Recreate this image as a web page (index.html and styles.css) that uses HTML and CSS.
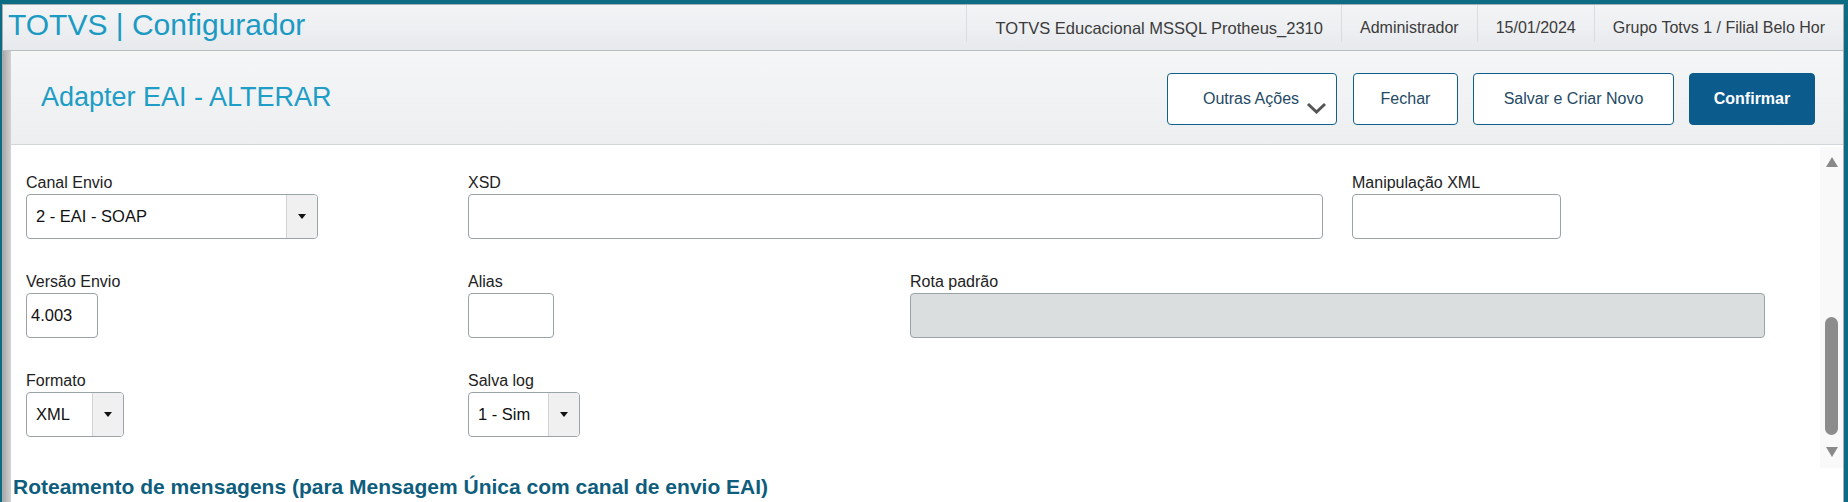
FILE: index.html
```html
<!DOCTYPE html>
<html lang="pt-BR">
<head>
<meta charset="utf-8">
<title>TOTVS | Configurador</title>
<link rel="stylesheet" href="styles.css">
</head>
<body>
<div class="app">
  <header class="topbar">
    <div class="brand">TOTVS | Configurador</div>
    <ul class="info">
      <li class="info-item first">TOTVS Educacional MSSQL Protheus_2310</li>
      <li class="info-item">Administrador</li>
      <li class="info-item">15/01/2024</li>
      <li class="info-item">Grupo Totvs 1 / Filial Belo Hor</li>
    </ul>
  </header>
  <div class="main">
    <div class="strip"></div>
    <div class="work">
      <div class="pagehead">
        <h1 class="page-title">Adapter EAI - ALTERAR</h1>
        <div class="actions">
          <button class="btn btn-more"><span class="more-label">Outras Ações</span><svg class="chev" width="21" height="12" viewBox="0 0 21 12"><polyline points="2,2 10.5,10 19,2" fill="none" stroke="#555" stroke-width="3"/></svg></button>
          <button class="btn btn-close">Fechar</button>
          <button class="btn btn-save">Salvar e Criar Novo</button>
          <button class="btn btn-primary">Confirmar</button>
        </div>
      </div>
      <div class="body">
        <div class="form">
          <div class="grid">
            <div class="field">
              <label>Canal Envio</label>
              <div class="box select w-canal"><span class="value">2 - EAI - SOAP</span><span class="caret"></span></div>
            </div>
            <div class="field span2">
              <label>XSD</label>
              <div class="box w-wide"></div>
            </div>
            <div class="field">
              <label>Manipulação XML</label>
              <div class="box w-manip"></div>
            </div>

            <div class="field">
              <label>Versão Envio</label>
              <div class="box input w-versao">4.003</div>
            </div>
            <div class="field">
              <label>Alias</label>
              <div class="box w-alias"></div>
            </div>
            <div class="field span2">
              <label>Rota padrão</label>
              <div class="box disabled w-wide"></div>
            </div>

            <div class="field">
              <label>Formato</label>
              <div class="box select w-formato"><span class="value">XML</span><span class="caret"></span></div>
            </div>
            <div class="field">
              <label>Salva log</label>
              <div class="box select w-salva"><span class="value">1 - Sim</span><span class="caret"></span></div>
            </div>
          </div>
          <h2 class="section">Roteamento de mensagens (para Mensagem Única com canal de envio EAI)</h2>
        </div>
        <div class="scroll">
          <span class="arrow up"></span>
          <span class="thumb"></span>
          <span class="arrow down"></span>
        </div>
      </div>
    </div>
  </div>
</div>
</body>
</html>
```

FILE: styles.css
```css
html, body {
  margin: 0;
  height: 100%;
}
body {
  background: #0b6c83;
  font-family: "Liberation Sans", Arial, sans-serif;
  overflow: hidden;
}
.app {
  margin: 4px 4px 0 2px;
  height: calc(100vh - 4px);
  box-sizing: border-box;
  border: 1px solid #a7adb1;
  border-bottom: none;
  display: flex;
  flex-direction: column;
  background: #fff;
  overflow: hidden;
}

/* top bar */
.topbar {
  flex: none;
  height: 46px;
  box-sizing: border-box;
  border-bottom: 1px solid #b9bec2;
  background: linear-gradient(#f3f4f6, #e7eaed);
  display: flex;
  justify-content: space-between;
  align-items: flex-start;
}
.brand {
  padding: 5px 0 0 5px;
  font-size: 30px;
  line-height: 30px;
  color: #1b9ac3;
  white-space: nowrap;
}
.info {
  list-style: none;
  margin: 0;
  padding: 0;
  display: flex;
  align-items: flex-start;
}
.info-item {
  height: 37px;
  box-sizing: border-box;
  padding: 14px 18px 0;
  font-size: 16px;
  line-height: 18px;
  color: #3b3b3b;
  border-left: 1px solid #d9dde0;
  white-space: nowrap;
}
.info-item.first {
  padding-left: 29px;
  font-size: 16.5px;
}

/* main */
.main {
  flex: 1;
  display: flex;
  min-height: 0;
}
.strip {
  flex: none;
  width: 8px;
  background: linear-gradient(to right, #a9a9a9, #d2d2d2);
}
.work {
  flex: 1;
  min-width: 0;
  display: flex;
  flex-direction: column;
}
.pagehead {
  flex: none;
  height: 94px;
  box-sizing: border-box;
  padding: 22px 28px 0 30px;
  border-bottom: 1px solid #d3d6d9;
  background: linear-gradient(#f5f6f6, #eceef0);
  display: flex;
  justify-content: space-between;
  align-items: flex-start;
}
.page-title {
  margin: 9px 0 0;
  font-size: 27px;
  font-weight: normal;
  line-height: 30px;
  color: #1e9dc6;
  white-space: nowrap;
}
.actions {
  display: flex;
  gap: 15px;
}
.btn {
  height: 52px;
  box-sizing: border-box;
  padding: 0;
  border: 1px solid #11608c;
  border-radius: 4px;
  background: #fff;
  color: #244a66;
  font-family: "Liberation Sans", Arial, sans-serif;
  font-size: 16px;
  white-space: nowrap;
  cursor: pointer;
}
.btn-more {
  width: 170px;
  margin-right: 1px;
  display: flex;
  align-items: center;
  padding: 0 6px 0 35px;
}
.more-label {
  white-space: nowrap;
}
.chev {
  margin: 17px 0 0 7px;
  flex: none;
}
.btn-close { width: 105px; }
.btn-save { width: 201px; }
.btn-primary {
  width: 126px;
  background: #0b5b8c;
  border-color: #0b5b8c;
  color: #fff;
  font-weight: bold;
}

/* body */
.body {
  flex: 1;
  min-height: 0;
  display: flex;
  background: #fff;
}
.form {
  flex: 1;
  min-width: 0;
  padding-top: 29px;
  overflow: hidden;
}
.grid {
  margin-left: 15px;
  display: grid;
  grid-template-columns: repeat(4, 442px);
  row-gap: 34px;
}
.span2 {
  grid-column: span 2;
}
.field label {
  display: block;
  margin-bottom: 2px;
  font-size: 16px;
  line-height: 18px;
  color: #222;
  white-space: nowrap;
}
.box {
  height: 45px;
  box-sizing: border-box;
  border: 1px solid #9aa3a6;
  border-radius: 4px;
  background: #fff;
  display: flex;
  align-items: center;
  font-size: 16.5px;
  color: #111;
  overflow: hidden;
}
.input {
  padding-left: 4px;
}
.disabled {
  background: #dadede;
}
.select .value {
  flex: 1;
  padding-left: 9px;
  white-space: nowrap;
}
.select .caret {
  flex: none;
  width: 30px;
  align-self: stretch;
  border-left: 1px solid #d0d4d5;
  background: #f0f0f0;
  display: flex;
  align-items: center;
  justify-content: center;
}
.select .caret::before {
  content: "";
  border-top: 5px solid #111;
  border-left: 4px solid transparent;
  border-right: 4px solid transparent;
}
.w-canal { width: 292px; }
.w-wide { width: 855px; }
.w-manip { width: 209px; }
.w-versao { width: 72px; }
.w-alias { width: 86px; }
.w-formato { width: 98px; }
.w-salva { width: 112px; }

.section {
  margin: 37px 0 0;
  padding-left: 2px;
  font-size: 21px;
  line-height: 25px;
  font-weight: bold;
  color: #0e5d7d;
  white-space: nowrap;
}

/* scrollbar */
.scroll {
  flex: none;
  width: 23px;
  height: 321px;
  margin-top: 2px;
  background: #f9f9f9;
  display: flex;
  flex-direction: column;
  align-items: center;
}
.arrow {
  width: 0;
  height: 0;
  border-left: 6.5px solid transparent;
  border-right: 6.5px solid transparent;
}
.arrow.up {
  margin-top: 10px;
  border-bottom: 10px solid #8a8a8a;
}
.thumb {
  margin-top: 150px;
  width: 13px;
  height: 118px;
  border-radius: 6.5px;
  background: #8c8c8c;
}
.arrow.down {
  margin-top: 12px;
  border-top: 10px solid #8a8a8a;
}
```
